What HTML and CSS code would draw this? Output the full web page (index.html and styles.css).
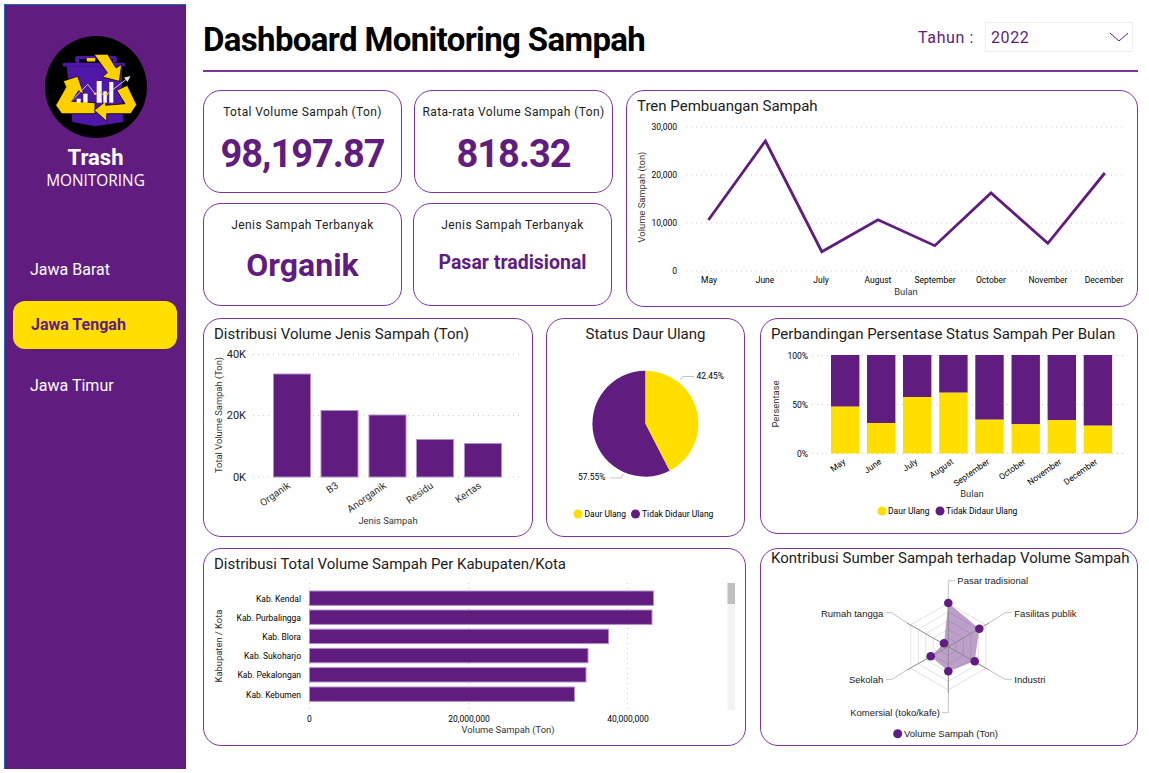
FILE: index.html
```html
<!DOCTYPE html>
<html lang="id">
<head>
  <meta charset="UTF-8">
  <title>Dashboard Monitoring Sampah</title>
  <link rel="stylesheet" href="styles.css">
</head>
<body>
<div class="page">

  <!-- sidebar -->
  <aside class="sidebar">
    <svg class="logo" width="102" height="102" viewBox="0 0 102 102">
      <circle cx="51" cy="51" r="51" fill="#000"/>
      <rect x="30" y="20" width="42" height="7" rx="3" fill="#4f17a8"/>
      <rect x="34" y="23" width="34" height="4" fill="#000"/>
      <rect x="41.7" y="22" width="8.5" height="3.5" rx="1" fill="#ffd000"/>
      <rect x="17.7" y="26.7" width="62.3" height="3.8" rx="1.5" fill="#4f17a8"/>
      <polygon points="21.7,30.3 76.7,30.3 78,86 50,90.3 27.3,86" fill="#4f17a8"/>
      <g fill="#ffd000" stroke="#000" stroke-width="0.8" stroke-linejoin="round">
        <polygon points="49,18.3 62.7,18.3 71,32 76.7,28.3 74.3,45.3 57.3,41 62.3,36.7"/>
        <polygon points="18.3,45 32.7,40.3 39,58.7 33.7,54.7 26.7,65.3 50,66.7 50,77.7 16.7,77.7 10.7,69.3 21,51"/>
        <polygon points="49.3,74.3 60.7,65.3 60.7,69.3 80,67.7 71.7,54.3 82.3,49.3 91.7,68.7 85.7,77.7 61.7,77.7 61.7,85.3"/>
      </g>
      <g fill="#fff">
        <rect x="31.7" y="62.7" width="4" height="4"/>
        <rect x="38.3" y="57.7" width="4.3" height="9"/>
        <rect x="51.7" y="45" width="5" height="21.7"/>
        <rect x="58.3" y="55.3" width="3.5" height="11.4"/>
        <rect x="64.3" y="46" width="4" height="20.7"/>
      </g>
      <polyline points="27.3,64.3 42.7,48.3 50,57.7 61.7,58.3 84,41.2" fill="none" stroke="#ddd" stroke-width="0.9"/>
      <polygon points="85.5,40 79,41.5 82.5,46" fill="#ddd"/>
      <circle cx="50" cy="57.7" r="1.2" fill="#ffd000"/>
      <circle cx="56" cy="56.7" r="1.2" fill="#ffd000"/>
      <circle cx="61.7" cy="58.3" r="1.2" fill="#ffd000"/>
    </svg>
    <div class="brand">Trash</div>
    <div class="brand-sub">MONITORING</div>
    <nav class="nav">
      <div class="nav-item">Jawa Barat</div>
      <div class="nav-item active">Jawa Tengah</div>
      <div class="nav-item">Jawa Timur</div>
    </nav>
  </aside>

  <main class="main">
    <header class="header">
      <h1>Dashboard Monitoring Sampah</h1>
      <div class="filter">
        <span class="filter-label">Tahun :</span>
        <div class="select">
          <span>2022</span>
          <svg width="20" height="10" viewBox="0 0 20 10"><polyline points="1,1 10,9 19,1" fill="none" stroke="#611c80" stroke-width="1"/></svg>
        </div>
      </div>
    </header>

    <!-- baris 1 -->
    <section class="row row-one">
      <div class="kpi-block">
        <div class="kpi-row gap-wide">
          <div class="card kpi">
            <div class="kpi-label">Total Volume Sampah (Ton)</div>
            <div class="kpi-value">98,197.87</div>
          </div>
          <div class="card kpi">
            <div class="kpi-label">Rata-rata Volume Sampah (Ton)</div>
            <div class="kpi-value">818.32</div>
          </div>
        </div>
        <div class="kpi-row">
          <div class="card kpi">
            <div class="kpi-label">Jenis Sampah Terbanyak</div>
            <div class="kpi-value mid">Organik</div>
          </div>
          <div class="card kpi">
            <div class="kpi-label">Jenis Sampah Terbanyak</div>
            <div class="kpi-value small">Pasar tradisional</div>
          </div>
        </div>
      </div>

      <div class="card chart w-trend">
        <div class="card-title">Tren Pembuangan Sampah</div>
        <svg width="510" height="185" viewBox="627 121 510 185">
          <g class="grid">
            <line x1="686" y1="127" x2="1124" y2="127"/>
            <line x1="686" y1="175" x2="1124" y2="175"/>
            <line x1="686" y1="223" x2="1124" y2="223"/>
            <line x1="686" y1="271" x2="1124" y2="271"/>
          </g>
          <g class="tick end">
            <text x="677" y="130">30,000</text>
            <text x="677" y="178">20,000</text>
            <text x="677" y="226">10,000</text>
            <text x="677" y="274">0</text>
          </g>
          <polyline class="trend" points="708.4,220 765.4,141 821.8,251.7 878,219.7 934.8,245.7 991,193 1047.8,243.3 1104.8,173"/>
          <g class="tick mid-a">
            <text x="709" y="283">May</text>
            <text x="765" y="283">June</text>
            <text x="821" y="283">July</text>
            <text x="878" y="283">August</text>
            <text x="935" y="283">September</text>
            <text x="991" y="283">October</text>
            <text x="1048" y="283">November</text>
            <text x="1104" y="283">December</text>
          </g>
          <text class="axis mid-a" x="906" y="295">Bulan</text>
          <text class="axis mid-a" transform="rotate(-90 645 197)" x="645" y="197">Volume Sampah (ton)</text>
        </svg>
      </div>
    </section>

    <!-- baris 2 -->
    <section class="row row-two">
      <div class="card chart w-bar">
        <div class="card-title">Distribusi Volume Jenis Sampah (Ton)</div>
        <svg width="328" height="187" viewBox="204 349 328 187">
          <g class="grid">
            <line x1="253" y1="354.5" x2="522" y2="354.5"/>
            <line x1="253" y1="415.5" x2="522" y2="415.5"/>
            <line x1="253" y1="477" x2="522" y2="477"/>
          </g>
          <g class="tick-big end">
            <text x="246" y="358">40K</text>
            <text x="246" y="419">20K</text>
            <text x="246" y="481">0K</text>
          </g>
          <g class="bar">
            <rect x="273.5" y="374" width="37" height="103"/>
            <rect x="321" y="410.5" width="37" height="66.5"/>
            <rect x="369" y="415" width="37" height="62"/>
            <rect x="416.5" y="439.5" width="37" height="37.5"/>
            <rect x="464.5" y="443.5" width="37" height="33.5"/>
          </g>
          <g class="tick-mid end">
            <text x="291" y="487" transform="rotate(-35 291 487)">Organik</text>
            <text x="339" y="487" transform="rotate(-35 339 487)">B3</text>
            <text x="387" y="487" transform="rotate(-35 387 487)">Anorganik</text>
            <text x="434" y="487" transform="rotate(-35 434 487)">Residu</text>
            <text x="482" y="487" transform="rotate(-35 482 487)">Kertas</text>
          </g>
          <text class="axis mid-a" x="388" y="524">Jenis Sampah</text>
          <text class="axis mid-a" transform="rotate(-90 222 415)" x="222" y="415">Total Volume Sampah (Ton)</text>
        </svg>
      </div>

      <div class="card chart w-pie">
        <div class="card-title center">Status Daur Ulang</div>
        <svg width="197" height="187" viewBox="547 349 197 187">
          <path d="M645.5 423.7 L669.7 470.8 A53 53 0 1 1 645.5 370.7 Z" fill="#611c80"/>
          <path d="M645.5 423.7 V370.7 A53 53 0 0 1 669.7 470.8 Z" fill="#ffdf00"/>
          <polyline class="leader" points="680,380 683,376.5 694,376.5"/>
          <polyline class="leader" points="610,478 621,478 623.5,474"/>
          <text class="tick" x="696.5" y="379">42.45%</text>
          <text class="tick" x="578" y="480">57.55%</text>
          <circle cx="578" cy="514" r="4.5" fill="#ffdf00"/>
          <text class="tick" x="584.5" y="517">Daur Ulang</text>
          <circle cx="635.5" cy="514" r="4.5" fill="#611c80"/>
          <text class="tick" x="642" y="517">Tidak Didaur Ulang</text>
        </svg>
      </div>

      <div class="card chart w-stack">
        <div class="card-title">Perbandingan Persentase Status Sampah Per Bulan</div>
        <svg width="376" height="184" viewBox="761 349 376 184">
          <g class="grid">
            <line x1="812" y1="355.5" x2="1125" y2="355.5"/>
            <line x1="812" y1="404.5" x2="1125" y2="404.5"/>
            <line x1="812" y1="453.5" x2="1125" y2="453.5"/>
          </g>
          <g class="tick end">
            <text x="808" y="359">100%</text>
            <text x="808" y="408">50%</text>
            <text x="808" y="457">0%</text>
          </g>
          <g class="bar-plain">
            <rect x="831" y="355" width="28.4" height="51.7"/>
            <rect x="867" y="355" width="28.4" height="68"/>
            <rect x="903" y="355" width="28.4" height="42"/>
            <rect x="939.2" y="355" width="28.4" height="37.7"/>
            <rect x="975.3" y="355" width="28.4" height="64.7"/>
            <rect x="1011.5" y="355" width="28.4" height="69.3"/>
            <rect x="1047.6" y="355" width="28.4" height="65.3"/>
            <rect x="1083.7" y="355" width="28.4" height="70.7"/>
          </g>
          <g class="bar-yellow">
            <rect x="831" y="406.7" width="28.4" height="46.8"/>
            <rect x="867" y="423" width="28.4" height="30.5"/>
            <rect x="903" y="397" width="28.4" height="56.5"/>
            <rect x="939.2" y="392.7" width="28.4" height="60.8"/>
            <rect x="975.3" y="419.7" width="28.4" height="33.8"/>
            <rect x="1011.5" y="424.3" width="28.4" height="29.2"/>
            <rect x="1047.6" y="420.3" width="28.4" height="33.2"/>
            <rect x="1083.7" y="425.7" width="28.4" height="27.8"/>
          </g>
          <g class="tick end">
            <text x="846" y="463" transform="rotate(-35 846 463)">May</text>
            <text x="882" y="463" transform="rotate(-35 882 463)">June</text>
            <text x="918" y="463" transform="rotate(-35 918 463)">July</text>
            <text x="954" y="463" transform="rotate(-35 954 463)">August</text>
            <text x="990" y="463" transform="rotate(-35 990 463)">September</text>
            <text x="1026" y="463" transform="rotate(-35 1026 463)">October</text>
            <text x="1062" y="463" transform="rotate(-35 1062 463)">November</text>
            <text x="1098" y="463" transform="rotate(-35 1098 463)">December</text>
          </g>
          <text class="axis mid-a" x="972" y="497">Bulan</text>
          <text class="axis mid-a" transform="rotate(-90 779 404)" x="779" y="404">Persentase</text>
          <circle cx="882" cy="511" r="4.5" fill="#ffdf00"/>
          <text class="tick" x="888" y="514">Daur Ulang</text>
          <circle cx="940" cy="511" r="4.5" fill="#611c80"/>
          <text class="tick" x="946" y="514">Tidak Didaur Ulang</text>
        </svg>
      </div>
    </section>

    <!-- baris 3 -->
    <section class="row row-three">
      <div class="card chart w-list">
        <div class="card-title">Distribusi Total Volume Sampah Per Kabupaten/Kota</div>
        <svg width="541" height="166" viewBox="204 579 541 166">
          <g class="grid">
            <line x1="309.5" y1="583" x2="309.5" y2="710"/>
            <line x1="469" y1="583" x2="469" y2="710"/>
            <line x1="627.5" y1="583" x2="627.5" y2="710"/>
          </g>
          <g class="bar">
            <rect x="309.5" y="591" width="344" height="14.4"/>
            <rect x="309.5" y="610" width="342.5" height="14.4"/>
            <rect x="309.5" y="629.2" width="299" height="14.4"/>
            <rect x="309.5" y="648.4" width="278.5" height="14.4"/>
            <rect x="309.5" y="667.6" width="276.5" height="14.4"/>
            <rect x="309.5" y="687" width="265" height="14.4"/>
          </g>
          <g class="tick end">
            <text x="301" y="602">Kab. Kendal</text>
            <text x="301" y="621">Kab. Purbalingga</text>
            <text x="301" y="640">Kab. Blora</text>
            <text x="301" y="659">Kab. Sukoharjo</text>
            <text x="301" y="678">Kab. Pekalongan</text>
            <text x="301" y="698">Kab. Kebumen</text>
          </g>
          <g class="tick mid-a">
            <text x="309.5" y="722">0</text>
            <text x="469" y="722">20,000,000</text>
            <text x="628" y="722">40,000,000</text>
          </g>
          <text class="axis mid-a" x="508" y="733">Volume Sampah (Ton)</text>
          <text class="axis mid-a" transform="rotate(-90 222 646)" x="222" y="646">Kabupaten / Kota</text>
          <rect x="727.5" y="583" width="7.5" height="127" fill="#f3f3f3"/>
          <rect x="727.5" y="583" width="7.5" height="21" fill="#c0c0c0"/>
        </svg>
      </div>

      <div class="card chart w-radar">
        <div class="card-title tight">Kontribusi Sumber Sampah terhadap Volume Sampah</div>
        <svg width="376" height="177" viewBox="761 568 376 177">
          <g class="ring">
            <polygon points="948.3,603.2 985.8,624.9 985.8,668.3 948.3,690 910.8,668.3 910.8,624.9"/>
            <polygon points="948.3,611.9 978.3,629.2 978.3,664 948.3,681.3 918.3,664 918.3,629.2"/>
            <polygon points="948.3,620.6 970.8,633.6 970.8,659.6 948.3,672.6 925.8,659.6 925.8,633.6"/>
            <polygon points="948.3,629.3 963.3,638 963.3,655.4 948.3,664.1 933.3,655.4 933.3,638"/>
            <polygon points="948.3,638 955.8,642.3 955.8,651 948.3,655.4 940.8,651 940.8,642.3"/>
          </g>
          <polygon class="radar-fill" points="948.3,603 979.3,628.7 974.7,661.3 948.3,671.3 930.7,656.3 944,643.3"/>
          <g class="spoke">
            <line x1="948.3" y1="646.7" x2="948.3" y2="600"/>
            <line x1="948.3" y1="646.7" x2="989" y2="623"/>
            <line x1="948.3" y1="646.7" x2="989" y2="670"/>
            <line x1="948.3" y1="646.7" x2="948.3" y2="693"/>
            <line x1="948.3" y1="646.7" x2="907" y2="670"/>
            <line x1="948.3" y1="646.7" x2="907" y2="623"/>
          </g>
          <g class="leader">
            <polyline points="948.3,600 948.3,580.7 955,580.7"/>
            <polyline points="989,623 1005,612.7 1012,612.7"/>
            <polyline points="989,670 1005,679.3 1012,679.3"/>
            <polyline points="948.3,693 948.3,712.7 942,712.7"/>
            <polyline points="907,670 892,679.3 886,679.3"/>
            <polyline points="907,623 892,612.7 886,612.7"/>
          </g>
          <g fill="#611c80">
            <circle cx="948.3" cy="603" r="4.3"/>
            <circle cx="979.3" cy="628.7" r="4.3"/>
            <circle cx="974.7" cy="661.3" r="4.3"/>
            <circle cx="948.3" cy="671.3" r="4.3"/>
            <circle cx="930.7" cy="656.3" r="4.3"/>
            <circle cx="944" cy="643.3" r="4.3"/>
          </g>
          <g class="radar-label">
            <text x="957.3" y="584">Pasar tradisional</text>
            <text x="1014.3" y="617">Fasilitas publik</text>
            <text x="1014.3" y="683">Industri</text>
            <text class="end-a" x="940" y="716">Komersial (toko/kafe)</text>
            <text class="end-a" x="883.3" y="683">Sekolah</text>
            <text class="end-a" x="883.3" y="617">Rumah tangga</text>
          </g>
          <circle cx="897.7" cy="733.7" r="4.5" fill="#611c80"/>
          <text class="radar-label" x="904" y="737">Volume Sampah (Ton)</text>
        </svg>
      </div>
    </section>
  </main>
</div>
</body>
</html>
```

FILE: styles.css
```css
* {
  box-sizing: border-box;
}

body {
  margin: 0;
  background: #ffffff;
  font-family: Roboto, "Liberation Sans", sans-serif;
  color: #1c1c1c;
}

.page {
  display: flex;
  width: 1149px;
  height: 773px;
  padding: 4px 0 4px 4px;
}

/* sidebar */
.sidebar {
  width: 182px;
  background: #611c80;
  border-left: 1px solid #1f6db0;
  border-top: 1px solid #1f6db0;
  display: flex;
  flex-direction: column;
  align-items: center;
  padding-top: 31px;
  color: #ffffff;
}

.logo {
  display: block;
}

.brand {
  font-size: 22px;
  font-weight: 700;
  line-height: 26px;
  margin-top: 7px;
}

.brand-sub {
  font-family: "Open Sans", sans-serif;
  font-size: 15.4px;
  line-height: 20px;
}

.nav {
  width: 100%;
  display: flex;
  flex-direction: column;
  gap: 8px;
  margin-top: 55px;
  padding: 0 9px 0 8px;
}

.nav-item {
  height: 48px;
  line-height: 48px;
  padding-left: 17px;
  font-size: 16px;
  border-radius: 12px;
}

.nav-item.active {
  background: #ffdf00;
  color: #611c80;
  font-weight: 700;
  padding-left: 18px;
  margin: -1px 0 5px;
}

/* main */
.main {
  flex: 1;
  padding: 0 11px 0 17px;
}

.header {
  height: 68px;
  border-bottom: 2px solid #7c35a0;
  display: flex;
  justify-content: space-between;
  align-items: center;
  padding-top: 4px;
  margin-bottom: 18px;
}

.header h1 {
  margin: 0;
  font-size: 33px;
  font-weight: 700;
  letter-spacing: -0.65px;
  color: #000000;
}

.filter {
  display: flex;
  align-items: center;
  gap: 11px;
  margin: -4px 5px 0 0;
}

.filter-label {
  font-size: 16px;
  letter-spacing: 0.6px;
  color: #611c80;
}

.select {
  width: 148px;
  height: 30px;
  border: 1px solid #eeeeee;
  display: flex;
  align-items: center;
  justify-content: space-between;
  padding: 0 3px 0 5px;
  font-size: 16px;
  letter-spacing: 0.6px;
  color: #611c80;
}

.row {
  display: flex;
  align-items: flex-start;
}

.row-one {
  gap: 13px;
  height: 217px;
  margin-bottom: 11px;
}

.row-two {
  height: 219px;
  margin-bottom: 11px;
}

.row-three {
  gap: 14px;
}

.card {
  border: 1px solid #7c35a0;
  border-radius: 18px;
  background: #ffffff;
  overflow: hidden;
}

/* kpi */
.kpi-block {
  width: 410px;
  display: flex;
  flex-direction: column;
  gap: 10px;
}

.kpi-row {
  display: flex;
  gap: 11px;
}

.gap-wide {
  gap: 12px;
}

.kpi {
  width: 199px;
  height: 103px;
  text-align: center;
  padding-top: 13px;
}

.kpi-label {
  font-size: 12px;
  letter-spacing: 0.4px;
  line-height: 16px;
  white-space: nowrap;
}

.kpi-value {
  font-size: 38px;
  font-weight: 700;
  letter-spacing: -1px;
  line-height: 46px;
  margin-top: 11px;
  color: #611c80;
}

.kpi-value.mid {
  font-size: 32px;
  letter-spacing: 0;
  line-height: 44px;
  margin-top: 10px;
}

.kpi-value.small {
  font-size: 19.5px;
  letter-spacing: 0;
  line-height: 40px;
  margin-top: 10px;
}

/* chart card */
.chart svg {
  display: block;
}

.card-title {
  height: 30px;
  padding: 6px 0 0 10px;
  font-size: 15px;
  line-height: 18px;
  white-space: nowrap;
}

.card-title.center {
  padding-left: 0;
  text-align: center;
}

.card-title.tight {
  height: 19px;
  padding-top: 0;
}

.w-trend {
  width: 512px;
  height: 217px;
}

.w-bar {
  width: 330px;
  height: 219px;
  margin-right: 13px;
}

.w-pie {
  width: 199px;
  height: 219px;
  margin-right: 15px;
}

.w-stack {
  width: 378px;
  height: 216px;
}

.w-list {
  width: 543px;
  height: 198px;
}

.w-radar {
  width: 378px;
  height: 198px;
}

/* svg parts */
.tick,
.tick text {
  font-size: 8.5px;
  fill: #000000;
}

.tick-big text {
  font-size: 11px;
  fill: #222222;
}

.tick-mid text {
  font-size: 10px;
  fill: #333333;
}

.axis {
  font-size: 9.4px;
  fill: #333333;
}

.end text {
  text-anchor: end;
}

.mid-a,
.mid-a text {
  text-anchor: middle;
}

.end-a {
  text-anchor: end;
}

.grid line {
  stroke: #cccccc;
  stroke-width: 1;
  stroke-dasharray: 1 4;
}

.trend {
  fill: none;
  stroke: #611c80;
  stroke-width: 2.8;
}

.bar rect {
  fill: #611c80;
  stroke: #b08fc7;
  stroke-width: 1;
}

.bar-plain rect {
  fill: #611c80;
}

.bar-yellow rect {
  fill: #ffdf00;
}

.leader,
.leader polyline {
  fill: none;
  stroke: #c4c4c4;
  stroke-width: 1;
}

.ring polygon {
  fill: none;
  stroke: #e4e4e4;
  stroke-width: 1;
}

.radar-fill {
  fill: #611c80;
  fill-opacity: 0.42;
}

.spoke line {
  stroke: #8a8a8a;
  stroke-width: 1;
}

.radar-label,
.radar-label text {
  font-family: "Liberation Sans", sans-serif;
  font-size: 9.5px;
  fill: #222222;
}
```
